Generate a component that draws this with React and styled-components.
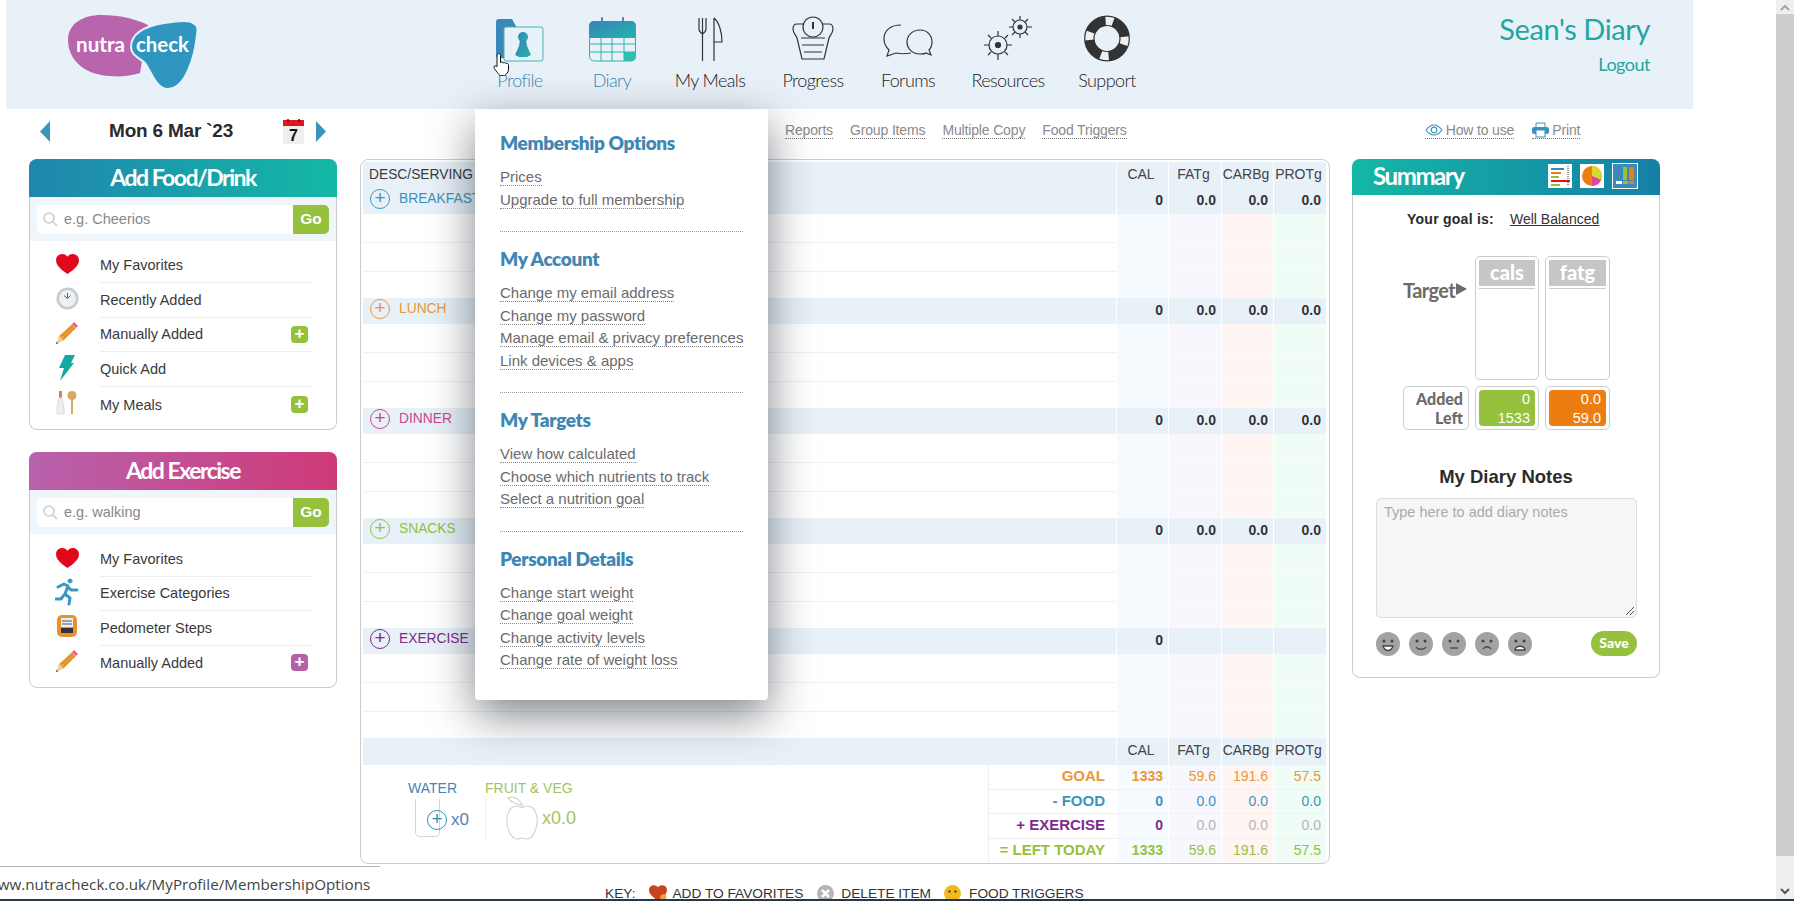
import React from 'react'
import styled, { createGlobalStyle } from 'styled-components'

const GlobalStyle = createGlobalStyle`
  html, body {
    margin: 0;
    padding: 0;
    height: 901px;
    overflow: hidden;
    background: #fff;
    font-family: "Liberation Sans", Arial, sans-serif;
    color: #333;
  }
`

const ROUND = '"Lato", "Open Sans", sans-serif'

const Window = styled.div`
  display: flex;
  height: 901px;
  overflow: hidden;
  position: relative;
  border-bottom: 2px solid #25384a;
  box-sizing: border-box;
`

const Page = styled.div`
  flex: 1;
  min-width: 0;
  position: relative;
`

const ScrollBar = styled.div`
  width: 18px;
  display: flex;
  flex-direction: column;
  background: #efefef;
`

const ScrollArrow = styled.div`
  height: 14px;
  display: flex;
  align-items: center;
  justify-content: center;
  background: #efefef;
`

const ScrollThumb = styled.div`
  height: 842px;
  background: #cdcdcd;
`

const ScrollRest = styled.div`
  flex: 1;
  display: flex;
  align-items: flex-end;
  justify-content: center;
  padding-bottom: 4px;
`

const Header = styled.header`
  width: 1687px;
  height: 109px;
  margin-left: 6px;
  background: #e9f1f8;
  display: flex;
  position: relative;
`

const LogoWrap = styled.div`
  width: 130px;
  margin-left: 62px;
  padding-top: 15px;
`

const Nav = styled.nav`
  display: flex;
  margin-left: 276px;
  padding-top: 15px;
`

const NavItem = styled.a`
  width: ${p => p.w}px;
  display: flex;
  flex-direction: column;
  align-items: center;
  font-family: ${ROUND};
  font-size: 18px;
  font-weight: 300;
  letter-spacing: -0.6px;
  color: ${p => (p.active ? '#3d86b3' : '#222')};
  line-height: 20px;
  svg { display: block; height: 47px; margin-bottom: 8px; }
`

const Account = styled.div`
  margin-left: auto;
  padding: 12px 43px 0 0;
  text-align: right;
  font-family: ${ROUND};
  color: #22a6a0;
`

const DiaryName = styled.div`
  font-size: 29px;
  line-height: 34px;
  letter-spacing: -0.4px;
`

const Logout = styled.div`
  font-size: 18px;
  line-height: 22px;
  margin-top: 7px;
  letter-spacing: -0.5px;
`

const ToolRow = styled.div`
  height: 50px;
  box-sizing: border-box;
  display: flex;
  align-items: center;
  padding: 0 0 6px 40px;
`

const DateNav = styled.div`
  display: flex;
  align-items: center;
  width: 286px;
`

const DateText = styled.div`
  font-weight: bold;
  font-size: 19px;
  letter-spacing: -0.2px;
  color: #2b2b2b;
  margin-left: 59px;
  width: 174px;
  white-space: nowrap;
`

const DateGap = styled.span`
  width: 12px;
`

const ToolLinks = styled.div`
  display: flex;
  gap: 17px;
  margin: 0 0 2px 459px;
`

const ToolLink = styled.a`
  display: inline-flex;
  align-items: center;
  gap: 3px;
  font-size: 14px;
  color: #8a8a8a;
  border-bottom: 1px dotted #777;
  line-height: 16px;
  letter-spacing: -0.15px;
`

const HelpLinks = styled.div`
  display: flex;
  gap: 18px;
  margin: 0 0 2px 298px;
`

const Columns = styled.div`
  display: flex;
  align-items: flex-start;
  padding-left: 29px;
`

const LeftCol = styled.div`
  width: 308px;
  display: flex;
  flex-direction: column;
  gap: 22px;
`

const Card = styled.section`
  border: 1px solid #ccc;
  border-top: 0;
  border-radius: 8px;
  background: #fff;
  box-sizing: border-box;
  height: ${p => p.h}px;
`

const CardHead = styled.div`
  height: 38px;
  margin: 0 -1px;
  border-radius: 8px 8px 0 0;
  background: linear-gradient(90deg, ${p => p.from}, ${p => p.to});
  color: #fff;
  font-family: ${ROUND};
  font-weight: 700;
  font-size: 23px;
  letter-spacing: -1.5px;
  line-height: 36px;
  text-align: center;
`

const SearchBar = styled.div`
  height: 44px;
  background: #f0f5f9;
  display: flex;
  align-items: center;
  padding: 0 7px 0 7px;
`

const SearchInput = styled.div`
  flex: 1;
  height: 29px;
  background: #fff;
  border-radius: 5px 0 0 5px;
  display: flex;
  align-items: center;
  gap: 6px;
  padding-left: 5px;
  font-size: 14.5px;
  color: #888;
`

const GoButton = styled.div`
  width: 36px;
  height: 29px;
  background: #95c13d;
  color: #fff;
  border-radius: 0 5px 5px 0;
  font-weight: bold;
  font-size: 15.5px;
  line-height: 27px;
  text-align: center;
`

const SideList = styled.ul`
  list-style: none;
  margin: 0;
  padding: ${p => p.pad}px 0 0 0;
`

const SideItem = styled.li`
  display: flex;
  align-items: center;
  height: ${p => p.h}px;
  font-size: 14.5px;
  color: #3a3a3a;
`

const SideIcon = styled.span`
  width: 70px;
  box-sizing: border-box;
  flex: none;
  display: flex;
  justify-content: center;
  padding: 0 0 3px 4px;
  svg { display: block; }
`

const SideLabel = styled.div`
  flex: none;
  width: 213px;
  height: 100%;
  display: flex;
  align-items: center;
  justify-content: space-between;
  padding-right: 5px;
  box-sizing: border-box;
  border-bottom: ${p => (p.last ? '0' : '1px solid #eee')};
`

const PlusBox = styled.span`
  width: 17px;
  height: 17px;
  border-radius: 4px;
  background: ${p => p.color};
  color: #fff;
  font-weight: bold;
  font-size: 17px;
  line-height: 16px;
  text-align: center;
`

const TableCard = styled.section`
  width: 970px;
  height: 705px;
  margin-left: 23px;
  border: 1px solid #ccc;
  border-radius: 8px;
  box-sizing: border-box;
  padding: 2px 3px 0 2px;
`

const Row = styled.div`
  display: grid;
  grid-template-columns: 1fr 52px 53px 52px 53px;
  height: ${p => p.h || 29}px;
  background: ${p => (p.band ? '#e9f1f8' : '#fff')};
`

const Desc = styled.div`
  display: flex;
  align-items: center;
  padding: 0 0 2px 6px;
  font-size: 13.8px;
  color: #3a3a3a;
  border-bottom: ${p => (p.line ? '1px solid #f0f0f0' : '0')};
`

const SectionName = styled.div`
  display: flex;
  align-items: center;
  gap: 9px;
  padding: 0 0 5px 7px;
  font-size: 13.8px;
  color: ${p => p.color};
`

const PlusRound = styled.span`
  width: 20px;
  height: 20px;
  flex: none;
  border: 1.3px solid ${p => p.color};
  border-radius: 50%;
  box-sizing: border-box;
  color: ${p => p.color};
  font-size: 19px;
  line-height: 16px;
  text-align: center;
`

const HeadCell = styled.div`
  text-align: center;
  font-size: 14px;
  line-height: 24px;
  padding-right: 3px;
  color: #444;
  border-left: 1px solid #fff;
  white-space: nowrap;
`

const NumCell = styled.div`
  text-align: right;
  padding-right: 5px;
  font-weight: bold;
  font-size: 14px;
  line-height: 24px;
  color: #333;
  border-left: 1px solid #fff;
`

const TintCell = styled.div`
  background: ${p => p.tint};
  border-left: 1px solid #fff;
  border-bottom: 1px solid #fbfbfb;
`

const Totals = styled.div`
  display: grid;
  grid-template-columns: 1fr 128px 52px 53px 52px 53px;
  height: 97px;
`

const WaterVeg = styled.div`
  display: flex;
  padding: 15px 0 0 45px;
`

const TrackCol = styled.div`
  position: relative;
  width: ${p => p.w}px;
  font-size: 14px;
  color: ${p => p.color};
  line-height: 16px;
`

const TrackBody = styled.div`
  display: flex;
  align-items: center;
  margin-top: 2px;
  font-size: ${p => p.big}px;
`

const TotalLabels = styled.div`
  display: flex;
  flex-direction: column;
  border-left: 1px solid #eee;
`

const TotalLabel = styled.div`
  flex: 1;
  font-weight: bold;
  font-size: 15px;
  text-align: right;
  line-height: 22px;
  padding-right: 11px;
  color: ${p => p.color};
  border-bottom: ${p => (p.last ? '0' : '1px solid #eee')};
  white-space: nowrap;
`

const TotalCol = styled.div`
  display: flex;
  flex-direction: column;
  background: ${p => p.tint};
  border-left: 1px solid #fff;
`

const TotalValue = styled.div`
  flex: 1;
  text-align: right;
  padding-right: 5px;
  line-height: 22px;
  font-size: 14px;
  font-weight: ${p => (p.bold ? 'bold' : 'normal')};
  color: ${p => p.color};
  border-bottom: ${p => (p.last ? '0' : '1px solid #eef2f5')};
`

const RightCol = styled.aside`
  width: 308px;
  margin-left: 22px;
`

const SummaryHead = styled(CardHead)`
  height: 36px;
  display: flex;
  align-items: center;
  padding: 0 22px 3px 21px;
  box-sizing: border-box;
  font-size: 24px;
  letter-spacing: -1.4px;
  text-align: left;
  svg { margin-left: 8px; }
`

const SummaryTitle = styled.div`
  flex: 1;
`

const GoalLine = styled.div`
  display: flex;
  gap: 16px;
  padding: 16px 0 0 54px;
  font-size: 14px;
  line-height: 16px;
`

const GoalLabel = styled.b`
  color: #2b2b2b;
  letter-spacing: 0.25px;
`

const GoalValue = styled.u`
  color: #333;
`

const TargetGrid = styled.div`
  display: grid;
  grid-template-columns: 66px 64px 65px;
  grid-template-rows: 124px 44px;
  column-gap: 6px;
  row-gap: 6px;
  margin: 29px 0 0 50px;
  font-family: ${ROUND};
`

const TargetLabel = styled.div`
  font-weight: 700;
  font-size: 20px;
  letter-spacing: -0.6px;
  color: #6d6a6a;
  padding-top: 22px;
  display: flex;
  align-items: flex-start;
  gap: 1px;
  white-space: nowrap;
  line-height: 24px;
`

const Arrow = styled.span`
  width: 0;
  height: 0;
  margin-top: 5px;
  border-left: 11px solid #6d6a6a;
  border-top: 6px solid transparent;
  border-bottom: 6px solid transparent;
`

const Gauge = styled.div`
  border: 1px solid #ccc;
  border-radius: 5px;
  padding: 3px;
`

const GaugeTitle = styled.div`
  background: #c6c6c6;
  color: #fff;
  font-weight: 900;
  font-size: 20px;
  line-height: 25px;
  height: 26px;
  text-align: center;
  border-bottom: 2px solid #fff;
  box-shadow: 0 1px 0 #ccc;
`

const RowNames = styled.div`
  border: 1px solid #ccc;
  border-radius: 5px;
  text-align: right;
  padding: 2px 5px 0 0;
  font-weight: 900;
  font-size: 16px;
  line-height: 19px;
  color: #6d6a6a;
`

const GaugeValue = styled.div`
  height: 100%;
  box-sizing: border-box;
  background: ${p => p.color};
  color: #fff;
  border-radius: 4px;
  text-align: right;
  padding-right: 5px;
  font-family: "Liberation Sans", Arial, sans-serif;
  font-size: 14.5px;
  line-height: 18.5px;
`

const NotesTitle = styled.h3`
  margin: 36px 0 0 0;
  text-align: center;
  font-size: 18.5px;
  line-height: 22px;
  color: #2b2b2b;
`

const NotesBox = styled.div`
  position: relative;
  width: 261px;
  height: 120px;
  margin: 10px 0 0 23px;
  box-sizing: border-box;
  background: #f6f6f6;
  border: 1px solid #ddd;
  border-radius: 5px;
  padding: 5px 7px;
  font-size: 14.5px;
  color: #aaa;
`

const NotesGrip = styled.svg`
  position: absolute;
  right: 1px;
  bottom: 1px;
`

const NotesFoot = styled.div`
  display: flex;
  align-items: center;
  gap: 9px;
  margin: 13px 0 0 23px;
  width: 261px;
`

const SaveButton = styled.div`
  margin-left: auto;
  width: 46px;
  height: 25px;
  border-radius: 13px;
  background: #95c13d;
  color: #fff;
  font-family: ${ROUND};
  font-weight: 900;
  font-size: 14px;
  line-height: 24px;
  text-align: center;
`

const KeyBar = styled.div`
  display: flex;
  align-items: center;
  padding: 0 0 0 605px;
  height: 20px;
  margin-top: 19px;
  font-size: 13.7px;
  color: #333;
  white-space: nowrap;
`

const KeyLabel = styled.span`
  margin: 0 ${p => p.after}px 0 ${p => p.before}px;
`

const Menu = styled.div`
  position: absolute;
  left: 475px;
  top: 109px;
  width: 293px;
  height: 591px;
  box-sizing: border-box;
  padding: 22px 25px 0 25px;
  background: #fff;
  border-radius: 0 0 4px 4px;
  box-shadow: 0 15px 45px rgba(20, 30, 40, 0.55);
  z-index: 5;
`

const MenuGroup = styled.div`
  border-bottom: ${p => (p.last ? '0' : '1px dotted #999')};
  padding-bottom: ${p => (p.last ? 0 : 18)}px;
  margin-bottom: 15px;
`

const MenuTitle = styled.h4`
  margin: 0 0 13px 0;
  font-family: ${ROUND};
  font-size: 19px;
  line-height: 24px;
  font-weight: 800;
  letter-spacing: -0.35px;
  color: #3f87b3;
`

const MenuLink = styled.a`
  display: table;
  font-size: 15px;
  line-height: 17px;
  margin-bottom: 4.5px;
  color: #6b6b6b;
  border-bottom: 1px dotted #888;
  white-space: nowrap;
`

const StatusBar = styled.div`
  position: absolute;
  left: 0;
  bottom: 0;
  width: 380px;
  height: 32px;
  background: #fff;
  border-top: 1px solid #b5b5b5;
  font-family: "Open Sans", sans-serif;
  font-size: 15.2px;
  line-height: 34px;
  color: #444;
  white-space: nowrap;
  overflow: hidden;
  z-index: 6;
`

const StatusText = styled.span`
  display: block;
  margin-left: -14px;
`

const HandWrap = styled.svg`
  position: absolute;
  left: 493px;
  top: 52px;
  z-index: 7;
`

const Glass = styled.div`
  position: absolute;
  left: 7px;
  top: 19px;
  width: 25px;
  height: 38px;
  box-sizing: border-box;
  border: 1px solid #d4d4d4;
  border-top: 0;
  border-radius: 0 0 5px 5px;
`

const WaterBody = styled(TrackBody)`
  padding: 12px 0 0 19px;
  position: relative;
  gap: 4px;
`

const VegBody = styled(TrackBody)`
  position: relative;
  margin-top: 0;
  padding-left: 19px;
  border-left: 1px solid #eee;
  gap: 3px;
  font-size: 18px;
`

const Search = () => (
  <svg width="16" height="16" viewBox="0 0 16 16" fill="none" stroke="#ccc" strokeWidth="1.6">
    <circle cx="7" cy="7" r="5" />
    <path d="M11 11l4 4" />
  </svg>
)

const Heart = () => (
  <svg width="23" height="20" viewBox="0 0 24 21"><path fill="#e0081a" d="M12 21C5 16 0 12 0 6.500 0 2.500 3 0 6.500 0 9 0 11 1.200 12 3c1-1.800 3-3 5.500-3C21 0 24 2.500 24 6.500 24 12 19 16 12 21z" /></svg>
)

const KeyHeart = () => (
  <svg width="18" height="16" viewBox="0 0 24 21">
    <path fill="#c8441a" d="M12 21C5 16 0 12 0 6.500 0 2.500 3 0 6.500 0 9 0 11 1.200 12 3c1-1.800 3-3 5.500-3C21 0 24 2.500 24 6.500 24 12 19 16 12 21z" />
    <circle cx="19" cy="16" r="4" fill="#f0a13b" />
  </svg>
)

const KeyDelete = () => (
  <svg width="17" height="17" viewBox="0 0 17 17">
    <circle cx="8.500" cy="8.500" r="8.500" fill="#b5b5b5" />
    <path stroke="#fff" strokeWidth="2.500" d="M5 5l7 7M12 5l-7 7" />
  </svg>
)

const KeySmiley = () => (
  <svg width="17" height="17" viewBox="0 0 17 17">
    <circle cx="8.500" cy="8.500" r="8.500" fill="#f2b91a" />
    <circle cx="5.500" cy="6.500" r="1.200" fill="#444" />
    <circle cx="11.500" cy="6.500" r="1.200" fill="#444" />
  </svg>
)

const Clock = () => (
  <svg width="23" height="23" viewBox="0 0 23 23">
    <circle cx="11.500" cy="11.500" r="11" fill="#c5cbcf" />
    <circle cx="11.500" cy="11.500" r="8.500" fill="#eef0f1" />
    <path d="M11.500 6v5.500L8 8.500M11.500 11.500l3-3" stroke="#666" fill="none" />
  </svg>
)

const Pencil = () => (
  <svg width="24" height="24" viewBox="0 0 24 24">
    <path fill="#f0a13b" d="M4 15L17 3l4 4L8 20z" />
    <path fill="#f3cfa0" d="M4 15l-3 8 7-3z" />
    <path fill="#e8607f" d="M17 3l2-2 4 4-2 2z" />
    <path stroke="#c97a1d" d="M7 15L18 5M9 17L20 7" />
    <path fill="#333" d="M1 23l.8-2.200 1.400 1.400z" />
  </svg>
)

const Bolt = () => (
  <svg width="16" height="26" viewBox="0 0 16 26"><path fill="#14a8a0" d="M6 0h10l-4 8h3L1 26l4-13H0z" /></svg>
)

const Meals = () => (
  <svg width="22" height="24" viewBox="0 0 22 24">
    <path fill="#e8745a" d="M3 0h3v7H3z" />
    <path fill="#eee" stroke="#ddd" d="M3 7h3l2 10v6H1v-6z" />
    <circle cx="16" cy="4.500" r="4.500" fill="#d9a862" />
    <path stroke="#d9a862" strokeWidth="2" d="M16 8v15" />
  </svg>
)

const Runner = () => (
  <svg width="24" height="28" viewBox="0 0 24 28" fill="none" stroke="#3a98c0" strokeWidth="3" strokeLinecap="round" strokeLinejoin="round">
    <circle cx="15" cy="3" r="2" fill="#3a98c0" strokeWidth="1" />
    <path d="M3 9l6-3 4 2-3 8 5 4-1 6M13 9l3 3h6M9 17l-3 4H1" />
  </svg>
)

const Pedometer = () => (
  <svg width="20" height="25" viewBox="0 0 20 25">
    <rect x="0" y="1" width="20" height="22" rx="5" fill="#ea912f" />
    <rect x="4" y="4" width="12" height="9" fill="#eee" />
    <path stroke="#555" d="M5 7h10M5 10h10" />
    <rect x="4" y="14" width="12" height="5" fill="#333" />
  </svg>
)

const CalendarDay = () => (
  <svg width="21" height="25" viewBox="0 0 21 25">
    <rect y="1" width="21" height="24" fill="#eeeeee" />
    <rect y="1" width="21" height="6" fill="#e2141d" />
    <path stroke="#222" strokeWidth="1.500" d="M5 0v3M16 0v3" />
    <text x="10.500" y="21.500" textAnchor="middle" fontFamily="Liberation Sans" fontWeight="bold" fontSize="16" fill="#111">7</text>
  </svg>
)

const Tri = ({ right }) => (
  <svg width="10" height="21" viewBox="0 0 10 21"><path fill="#3a94bd" d={right ? 'M0 0l10 10.500L0 21z' : 'M10 0L0 10.500 10 21z'} /></svg>
)

const Logo = () => (
  <svg width="130" height="75" viewBox="0 0 130 75">
    <path fill="#b865ae" d="M0 25C0 8 16 0 33 0c19 0 35 4 47 10L72 58c-10 3-20 4-30 3C18 60 0 46 0 25z" />
    <path fill="#2f97bf" stroke="#e9f1f8" strokeWidth="2" d="M63 32c0-14 15-21 33-24 12-2 26-3 29 0 5 2 5 6 4 12-2 20-11 54-29 54-12 0-16-16-23-26-7-6-14-8-14-16z" />
    <text x="8" y="37" fontFamily="Lato" fontWeight="700" fontSize="21" textLength="49" lengthAdjust="spacingAndGlyphs" fill="#fff">nutra</text>
    <text x="68" y="37" fontFamily="Lato" fontWeight="700" fontSize="21" textLength="53" lengthAdjust="spacingAndGlyphs" fill="#fff">check</text>
  </svg>
)

const ProfileIcon = () => (
  <svg width="48" height="47" viewBox="0 0 48 47">
    <defs>
      <linearGradient id="pf" x1="0" x2="1" y1="0" y2="1"><stop offset="0" stopColor="#3a83b5" /><stop offset="1" stopColor="#22b3ae" /></linearGradient>
    </defs>
    <path fill="#3a88b7" d="M0 7c0-2 1-3 3-3h13l5 9v30H3c-2 0-3-1-3-3z" />
    <rect x="8" y="12" width="39" height="34" rx="2" fill="#e9f1f8" stroke="#3db5b1" strokeWidth="1" />
    <circle cx="27" cy="22" r="5" fill="url(#pf)" />
    <path fill="url(#pf)" d="M24 25h6l1 6 4 9-4 2h-8l-4-2 4-9z" />
  </svg>
)

const DiaryIcon = () => (
  <svg width="47" height="47" viewBox="0 0 47 47">
    <defs>
      <linearGradient id="dy" x1="0" x2="1" y1="0" y2="1"><stop offset="0" stopColor="#3a83b5" /><stop offset="1" stopColor="#22b3ae" /></linearGradient>
    </defs>
    <path fill="url(#dy)" d="M0 11c0-3 2-5 5-5h37c3 0 5 2 5 5v12H0z" />
    <path fill="none" stroke="#3a8bb5" strokeWidth="2" strokeLinecap="round" d="M13 3v8M34 3v8" />
    <path fill="none" stroke="#2fb1ae" d="M.5 21v20c0 3 2 5 5 5h36c3 0 5-2 5-5V21M.5 29h46M.5 37h46M12 21v25M23 21v25M35 21v25" />
    <path fill="#2fc0b0" d="M35 37h12v4c0 3-2 5-5 5h-7z" />
  </svg>
)

const MealsIcon = () => (
  <svg width="25" height="47" viewBox="0 0 25 47" fill="none" stroke="#333" strokeWidth="1.200">
    <path d="M1 3v11c0 3 2 4 3.500 5 1.500-1 3.500-2 3.500-5V3M4.500 3v43" />
    <path d="M16 3v43M16 3c5 4 8 14 8 24h-8" />
  </svg>
)

const ProgressIcon = () => (
  <svg width="42" height="47" viewBox="0 0 42 47" fill="none" stroke="#333" strokeWidth="1.200">
    <path d="M12 9H5C2 9 1 11 1 14c0 4 3 6 4 9l5 21h22l5-21c1-3 4-5 4-9 0-3-1-5-4-5h-7" />
    <circle cx="21" cy="12" r="10" fill="#e9f1f8" />
    <path d="M21 7v7" strokeWidth="2" />
    <path d="M9 23h24M10 30h22M12 37h18" />
  </svg>
)

const ForumsIcon = () => (
  <svg width="50" height="34" viewBox="0 0 50 34" fill="none" stroke="#333" strokeWidth="1.200" style={{ marginTop: 9, marginBottom: 12, height: 34 }}>
    <path d="M18 1C8 1 1 6 1 15c0 6 3 9 5 11l-2 6 9-3c5 1 10 1 15 0" />
    <path d="M37 6c-7 0-13 5-13 12s6 12 13 12c2 0 5 0 6-1l5 2-2-5c2-2 3-5 3-8 0-7-5-12-12-12z" fill="#e9f1f8" />
  </svg>
)

const ResourcesIcon = () => (
  <svg width="50" height="47" viewBox="0 0 50 47" fill="none" stroke="#333" strokeWidth="1.200">
    <circle cx="15" cy="30" r="9" />
    <circle cx="15" cy="30" r="2.500" fill="#333" />
    <path d="M15 16v5M15 39v6M1 30h5M24 30h5M5 20l3 3M22 37l3 3M5 40l3-3M22 23l3-3" />
    <circle cx="37" cy="12" r="7" />
    <circle cx="37" cy="12" r="2" fill="#333" />
    <path d="M37 1v4M37 19v4M26 12h4M44 12h5M29 4l3 3M42 17l3 3M29 20l3-3M42 7l3-3" />
  </svg>
)

const SupportIcon = () => (
  <svg width="46" height="46" viewBox="0 0 46 46">
    <circle cx="23" cy="23" r="22.300" fill="#e9f1f8" stroke="#333" strokeWidth="1.200" />
    <circle cx="23" cy="23" r="13" fill="none" stroke="#333" strokeWidth="1.200" />
    <circle cx="23" cy="23" r="17.600" fill="none" stroke="#333" strokeWidth="9.500" strokeDasharray="19.600 8" transform="rotate(-70 23 23)" />
  </svg>
)

const Hand = () => (
  <HandWrap viewBox="0 0 18 24" width="18" height="24">
    <path fill="#fff" stroke="#111" strokeWidth="1" d="M6 1.500c1 0 1.500 1 1.500 2v7l1-.5c1 0 1.500.5 1.500 1l1-.5c1 0 1.500.5 1.500 1l1-.3c1 0 2 .7 2 2v4c0 3-2 5-4 6.500H7C5 21 1 17 1 15c0-1.500 1.500-1.500 3-.5V3.500c0-1 1-2 2-2z" />
  </HandWrap>
)

const Eye = () => (
  <svg width="18" height="12" viewBox="0 0 18 12" fill="none" stroke="#3a94bd" strokeWidth="1.200">
    <path d="M1 6c3-4 6-5 8-5s5 1 8 5c-3 4-6 5-8 5S4 10 1 6z" />
    <circle cx="9" cy="6" r="2.800" />
  </svg>
)

const Printer = () => (
  <svg width="17" height="16" viewBox="0 0 17 16">
    <path fill="none" stroke="#3a94bd" d="M4 5V1h9v4" />
    <rect y="5" width="17" height="7" rx="2" fill="#3a94bd" />
    <rect x="4" y="8" width="9" height="7" fill="#fff" stroke="#3a94bd" />
  </svg>
)

const Bars = () => (
  <svg width="24" height="24" viewBox="0 0 24 24">
    <rect width="24" height="24" fill="#fff" />
    <path stroke="#2d8fc0" strokeWidth="2" d="M3 5h13" />
    <path stroke="#ee7d11" strokeWidth="2" d="M3 9h10" />
    <path stroke="#95c13d" strokeWidth="2" d="M3 13h8" />
    <path stroke="#e3141e" strokeWidth="2" d="M3 17h19" />
    <path stroke="#95c13d" strokeWidth="2" d="M3 21h9" />
    <path stroke="#333" strokeDasharray="1 1" d="M20 2v20" />
  </svg>
)

const Pie = () => (
  <svg width="24" height="24" viewBox="0 0 24 24">
    <rect width="24" height="24" fill="#fff" />
    <circle cx="12" cy="12" r="10" fill="#ee7d11" />
    <path fill="#d5d92e" d="M12 12V2a10 10 0 0 1 10 10z" />
    <path fill="#d5d92e" d="M12 12h10a10 10 0 0 1-1 4z" />
    <path fill="#dd44aa" d="M12 12l9 4a10 10 0 0 1-9 6z" />
  </svg>
)

const Columns3 = () => (
  <svg width="26" height="26" viewBox="0 0 26 26">
    <rect x=".5" y=".5" width="25" height="25" fill="#3d88b8" stroke="#fff" />
    <path fill="#95c13d" d="M11 4h4v13h-4z" />
    <path fill="#ee7d11" d="M17 4h5v13h-5z" />
    <path fill="#fff" d="M4 18h6v3H4z" />
    <path fill="#95c13d" d="M11 18h5v3h-5z" />
    <path fill="#ee7d11" d="M17 18h5v3h-5z" />
  </svg>
)

const MOUTHS = [
  'M7 14c2 6 8 6 10 0z',
  'M7 15c2 3 8 3 10 0',
  'M8 16h8',
  'M8 17c2-3 6-3 8 0',
  'M7 18c1-5 9-5 10 0z',
]

const Face = ({ i }) => (
  <svg width="24" height="24" viewBox="0 0 24 24">
    <circle cx="12" cy="12" r="12" fill="#a2a2a2" />
    <circle cx="8" cy="9" r="1.500" fill="#444" />
    <circle cx="16" cy="9" r="1.500" fill="#444" />
    <path d={MOUTHS[i]} fill={i === 0 || i === 4 ? '#fff' : 'none'} stroke="#444" strokeWidth="1.300" />
  </svg>
)

const Apple = () => (
  <svg width="34" height="44" viewBox="0 0 38 44" fill="none" stroke="#d4d4d4" strokeWidth="1.200" preserveAspectRatio="none">
    <path d="M19 12c-3-2-8-3-12 0C2 16 1 24 3 31c2 7 6 12 11 12 2 0 3-1 5-1s3 1 5 1c5 0 9-5 11-12 2-7 1-15-4-19-4-3-9-2-12 0z" />
    <path d="M19 12c0-2 0-4 1-5M18 9C14 9 7 6 3 2c5-2 14 0 15 7z" />
  </svg>
)

const Chevron = ({ up }) => (
  <svg width="10" height="7" viewBox="0 0 10 7" fill="none" stroke={up ? '#a3a3a3' : '#555'} strokeWidth="2">
    <path d={up ? 'M1 6l4-4 4 4' : 'M1 1l4 4 4-4'} />
  </svg>
)

const TINTS = ['#f5fbff', '#f7f7fd', '#fff6f3', '#effdf6']
const HEADS = ['CAL', 'FATg', 'CARBg', 'PROTg']

const SECTIONS = [
  { name: 'BREAKFAST', color: '#3b94bd', values: ['0', '0.0', '0.0', '0.0'] },
  { name: 'LUNCH', color: '#e8973a', values: ['0', '0.0', '0.0', '0.0'] },
  { name: 'DINNER', color: '#c9478f', values: ['0', '0.0', '0.0', '0.0'] },
  { name: 'SNACKS', color: '#8fc23f', values: ['0', '0.0', '0.0', '0.0'] },
  { name: 'EXERCISE', color: '#7d2b8b', values: ['0', '', '', ''] },
]

const TOTALS = [
  { label: 'GOAL', color: '#e8973a', values: ['1333', '59.6', '191.6', '57.5'] },
  { label: '- FOOD', color: '#3b94bd', values: ['0', '0.0', '0.0', '0.0'] },
  { label: '+ EXERCISE', color: '#7d2b8b', values: ['0', '0.0', '0.0', '0.0'], dim: true },
  { label: '= LEFT TODAY', color: '#95c13d', values: ['1333', '59.6', '191.6', '57.5'] },
]

const MENU = [
  { title: 'Membership Options', links: ['Prices', 'Upgrade to full membership'] },
  { title: 'My Account', links: ['Change my email address', 'Change my password', 'Manage email & privacy preferences', 'Link devices & apps'] },
  { title: 'My Targets', links: ['View how calculated', 'Choose which nutrients to track', 'Select a nutrition goal'] },
  { title: 'Personal Details', links: ['Change start weight', 'Change goal weight', 'Change activity levels', 'Change rate of weight loss'] },
]

const FOOD_LIST = [
  { icon: <Heart />, label: 'My Favorites' },
  { icon: <Clock />, label: 'Recently Added' },
  { icon: <Pencil />, label: 'Manually Added', plus: true },
  { icon: <Bolt />, label: 'Quick Add' },
  { icon: <Meals />, label: 'My Meals', plus: true },
]

const EXERCISE_LIST = [
  { icon: <Heart />, label: 'My Favorites' },
  { icon: <Runner />, label: 'Exercise Categories' },
  { icon: <Pedometer />, label: 'Pedometer Steps' },
  { icon: <Pencil />, label: 'Manually Added', plus: true },
]

const SideCard = ({ title, from, to, hint, items, h, plusColor, pad, rowH }) => (
  <Card h={h}>
    <CardHead from={from} to={to}>{title}</CardHead>
    <SearchBar>
      <SearchInput><Search />{hint}</SearchInput>
      <GoButton>Go</GoButton>
    </SearchBar>
    <SideList pad={pad}>
      {items.map((it, i) => (
        <SideItem key={it.label} h={rowH}>
          <SideIcon>{it.icon}</SideIcon>
          <SideLabel last={i === items.length - 1}>
            {it.label}
            {it.plus && <PlusBox color={plusColor}>+</PlusBox>}
          </SideLabel>
        </SideItem>
      ))}
    </SideList>
  </Card>
)

export default function App() {
  return (
    <>
      <GlobalStyle />
      <Window>
        <Page>
          <Header>
            <LogoWrap><Logo /></LogoWrap>
            <Nav>
              <NavItem w={92} active><ProfileIcon />Profile</NavItem>
              <NavItem w={92} active><DiaryIcon />Diary</NavItem>
              <NavItem w={104}><MealsIcon />My Meals</NavItem>
              <NavItem w={102}><ProgressIcon />Progress</NavItem>
              <NavItem w={88}><ForumsIcon />Forums</NavItem>
              <NavItem w={112}><ResourcesIcon />Resources</NavItem>
              <NavItem w={86}><SupportIcon />Support</NavItem>
            </Nav>
            <Account>
              <DiaryName>Sean's Diary</DiaryName>
              <Logout>Logout</Logout>
            </Account>
          </Header>
          <Hand />
          <ToolRow>
            <DateNav>
              <Tri />
              <DateText>Mon 6 Mar `23</DateText>
              <CalendarDay />
              <DateGap />
              <Tri right />
            </DateNav>
            <ToolLinks>
              <ToolLink>Reports</ToolLink>
              <ToolLink>Group Items</ToolLink>
              <ToolLink>Multiple Copy</ToolLink>
              <ToolLink>Food Triggers</ToolLink>
            </ToolLinks>
            <HelpLinks>
              <ToolLink><Eye />How to use</ToolLink>
              <ToolLink><Printer />Print</ToolLink>
            </HelpLinks>
          </ToolRow>
          <Columns>
            <LeftCol>
              <SideCard title="Add Food/Drink" from="#1f86ae" to="#14b8a6" hint="e.g. Cheerios" items={FOOD_LIST} h={271} plusColor="#95c13d" pad={7} rowH={34.8} />
              <SideCard title="Add Exercise" from="#b862ad" to="#cf3a78" hint="e.g. walking" items={EXERCISE_LIST} h={236} plusColor="#b462a8" pad={8} rowH={34.5} />
            </LeftCol>
            <TableCard>
              <Row h={26} band>
                <Desc>DESC/SERVING</Desc>
                {HEADS.map(h => <HeadCell key={h}>{h}</HeadCell>)}
              </Row>
              {SECTIONS.map(s => (
                <div key={s.name}>
                  <Row h={26} band>
                    <SectionName color={s.color}>
                      <PlusRound color={s.color}>+</PlusRound>{s.name}
                    </SectionName>
                    {s.values.map((v, i) => <NumCell key={i}>{v}</NumCell>)}
                  </Row>
                  {[0, 1, 2].map(r => (
                    <Row key={r} h={r === 2 ? 26 : 29}>
                      <Desc line={r < 2} />
                      {TINTS.map(t => <TintCell key={t} tint={t} />)}
                    </Row>
                  ))}
                </div>
              ))}
              <Row h={27} band>
                <Desc />
                {HEADS.map(h => <HeadCell key={h}>{h}</HeadCell>)}
              </Row>
              <Totals>
                <WaterVeg>
                  <TrackCol w={77} color="#4a84b5">
                    WATER
                    <Glass />
                    <WaterBody big={17}><PlusRound color="#2b8fb8">+</PlusRound>x0</WaterBody>
                  </TrackCol>
                  <TrackCol w={110} color="#a3c45f">
                    FRUIT &amp; VEG
                    <VegBody><Apple />x0.0</VegBody>
                  </TrackCol>
                </WaterVeg>
                <TotalLabels>
                  {TOTALS.map((t, i) => <TotalLabel key={t.label} color={t.color} last={i === 3}>{t.label}</TotalLabel>)}
                </TotalLabels>
                {TINTS.map((tint, c) => (
                  <TotalCol key={tint} tint={tint}>
                    {TOTALS.map((t, i) => (
                      <TotalValue key={t.label} last={i === 3} bold={c === 0} color={t.dim && c > 0 ? '#b5b5b5' : t.color}>
                        {t.values[c]}
                      </TotalValue>
                    ))}
                  </TotalCol>
                ))}
              </Totals>
            </TableCard>
            <RightCol>
              <Card h={519}>
                <SummaryHead from="#14b8a6" to="#167fa5">
                  <SummaryTitle>Summary</SummaryTitle>
                  <Bars /><Pie /><Columns3 />
                </SummaryHead>
                <GoalLine>
                  <GoalLabel>Your goal is:</GoalLabel>
                  <GoalValue>Well Balanced</GoalValue>
                </GoalLine>
                <TargetGrid>
                  <TargetLabel>Target<Arrow /></TargetLabel>
                  <Gauge><GaugeTitle>cals</GaugeTitle></Gauge>
                  <Gauge><GaugeTitle>fatg</GaugeTitle></Gauge>
                  <RowNames>Added<br />Left</RowNames>
                  <Gauge><GaugeValue color="#95c13d">0<br />1533</GaugeValue></Gauge>
                  <Gauge><GaugeValue color="#ee7d11">0.0<br />59.0</GaugeValue></Gauge>
                </TargetGrid>
                <NotesTitle>My Diary Notes</NotesTitle>
                <NotesBox>
                  Type here to add diary notes
                  <NotesGrip width="10" height="10" viewBox="0 0 10 10" stroke="#555"><path d="M1 9l8-8M5 9l4-4" /></NotesGrip>
                </NotesBox>
                <NotesFoot>
                  {[0, 1, 2, 3, 4].map(i => <Face key={i} i={i} />)}
                  <SaveButton>Save</SaveButton>
                </NotesFoot>
              </Card>
            </RightCol>
          </Columns>
          <KeyBar>
            <KeyLabel before={0} after={14}>KEY:</KeyLabel>
            <KeyHeart />
            <KeyLabel before={5} after={14}>ADD TO FAVORITES</KeyLabel>
            <KeyDelete />
            <KeyLabel before={7} after={13}>DELETE ITEM</KeyLabel>
            <KeySmiley />
            <KeyLabel before={8} after={0}>FOOD TRIGGERS</KeyLabel>
          </KeyBar>
          <Menu>
            {MENU.map((g, i) => (
              <MenuGroup key={g.title} last={i === MENU.length - 1}>
                <MenuTitle>{g.title}</MenuTitle>
                {g.links.map(l => <MenuLink key={l}>{l}</MenuLink>)}
              </MenuGroup>
            ))}
          </Menu>
          <StatusBar><StatusText>www.nutracheck.co.uk/MyProfile/MembershipOptions</StatusText></StatusBar>
        </Page>
        <ScrollBar>
          <ScrollArrow><Chevron up /></ScrollArrow>
          <ScrollThumb />
          <ScrollRest><Chevron /></ScrollRest>
        </ScrollBar>
      </Window>
    </>
  )
}
